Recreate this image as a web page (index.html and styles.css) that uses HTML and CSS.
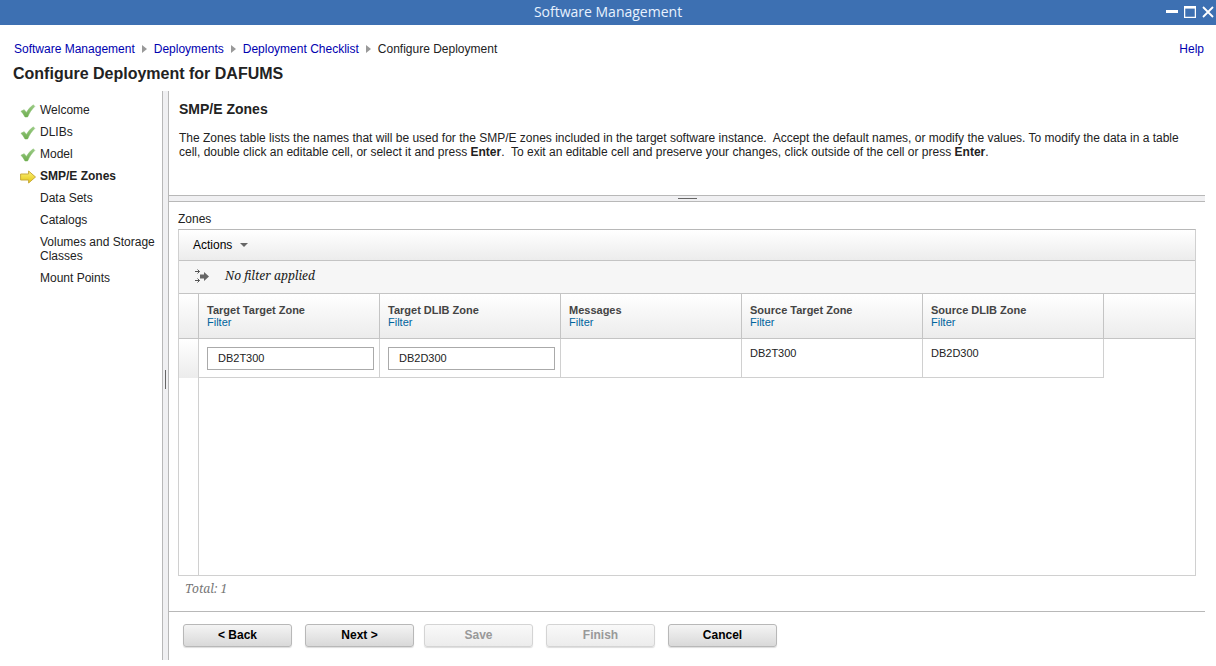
FILE: index.html
```html
<!DOCTYPE html>
<html lang="en">
<head>
<meta charset="utf-8">
<title>Software Management</title>
<link rel="stylesheet" href="styles.css">
</head>
<body>
<header class="titlebar">
  <span class="titlebar-side"></span>
  <span class="titlebar-text">Software Management</span>
  <div class="titlebar-side window-controls">
    <button type="button" class="window-button" aria-label="Minimize"><svg width="12" height="12" viewBox="0 0 12 12"><path d="M0 5.500h12" stroke="#fff" stroke-width="3"/></svg></button>
    <button type="button" class="window-button" aria-label="Maximize"><svg width="12" height="12" viewBox="0 0 12 12"><path d="M.6 0v11.400h10.800V0" fill="none" stroke="#fff" stroke-width="1.300"/><path d="M0 1.300h12" stroke="#fff" stroke-width="2.600"/></svg></button>
    <button type="button" class="window-button" aria-label="Close"><svg width="12" height="12" viewBox="0 0 12 12"><path d="M1 1l10 10M11 1L1 11" stroke="#fff" stroke-width="1.800"/></svg></button>
  </div>
</header>

<div class="top">
  <nav class="breadcrumb" aria-label="Breadcrumb">
    <a href="#">Software Management</a>
    <svg class="crumb-arrow" width="5" height="8" viewBox="0 0 5 8"><path d="M0 0l5 4-5 4z" fill="#999"/></svg>
    <a href="#">Deployments</a>
    <svg class="crumb-arrow" width="5" height="8" viewBox="0 0 5 8"><path d="M0 0l5 4-5 4z" fill="#999"/></svg>
    <a href="#">Deployment Checklist</a>
    <svg class="crumb-arrow" width="5" height="8" viewBox="0 0 5 8"><path d="M0 0l5 4-5 4z" fill="#999"/></svg>
    <span>Configure Deployment</span>
    <a class="help" href="#">Help</a>
  </nav>
  <h1 class="page-title">Configure Deployment for DAFUMS</h1>
</div>

<svg width="0" height="0" class="symbols" aria-hidden="true">
  <defs>
    <linearGradient id="green" x1="0" y1="0" x2="0" y2="1"><stop offset="0" stop-color="#9bcb86"/><stop offset="1" stop-color="#6fae50"/></linearGradient>
    <linearGradient id="gold" x1="0" y1="0" x2="0" y2="1"><stop offset="0" stop-color="#fdf27a"/><stop offset="1" stop-color="#e3c613"/></linearGradient>
    <symbol id="check" viewBox="0 0 16 14"><path d="M1 7.200l3.200-1.500 2.200 2.800C8.300 5.400 10.500 2.600 13.400.8l1.400 1.700C11.800 5.200 9.500 8.600 7.600 12.900H5C4 10.800 2.700 8.900 1 7.200z" fill="url(#green)" stroke="url(#green)" stroke-width=".6" stroke-linejoin="round"/></symbol>
    <symbol id="arrow" viewBox="0 0 16 14"><path d="M.6 4h8V1l6.900 6-6.900 6v-3H.6z" fill="url(#gold)" stroke="#c8ab3c" stroke-linejoin="round"/></symbol>
  </defs>
</svg>

<main class="workspace">
  <nav class="steps" aria-label="Steps">
    <ul class="step-list">
      <li class="step"><svg class="step-icon"><use href="#check"/></svg>Welcome</li>
      <li class="step"><svg class="step-icon"><use href="#check"/></svg>DLIBs</li>
      <li class="step"><svg class="step-icon"><use href="#check"/></svg>Model</li>
      <li class="step current"><svg class="step-icon"><use href="#arrow"/></svg>SMP/E Zones</li>
      <li class="step">Data Sets</li>
      <li class="step">Catalogs</li>
      <li class="step">Volumes and Storage Classes</li>
      <li class="step">Mount Points</li>
    </ul>
  </nav>
  <div class="splitter vertical"><span class="thumb"></span></div>

  <div class="content">
    <section class="intro">
      <h2 class="section-title">SMP/E Zones</h2>
      <p class="description">The Zones table lists the names that will be used for the SMP/E zones included in the target software instance.&nbsp; Accept the default names, or modify the values. To modify the data in a table cell, double click an editable cell, or select it and press <b>Enter</b>.&nbsp; To exit an editable cell and preserve your changes, click outside of the cell or press <b>Enter</b>.</p>
    </section>
    <div class="splitter horizontal"><span class="thumb"></span></div>

    <section class="zones">
      <h3 class="zones-label" id="zones-label">Zones</h3>
      <div class="grid">
        <div class="toolbar">
          <button type="button" class="actions">Actions <svg width="8" height="4" viewBox="0 0 8 4"><path d="M0 0h8L4 4z" fill="#666"/></svg></button>
        </div>
        <div class="filter-bar">
          <svg width="14" height="15" viewBox="0 0 14 15" fill="none" stroke="#555"><path d="M0 2.500h4.500M2.500.5l2 2-2 2M0 11.500h4.500M2.500 9.500l2 2-2 2"/><path d="M5 5.500h4V3l5 4.500L9 12V9.500H5z" fill="#666" stroke="none"/></svg>
          <span>No filter applied</span>
        </div>
        <table class="zone-table" aria-labelledby="zones-label">
          <colgroup><col class="col-handle"><col class="col-data"><col class="col-data"><col class="col-data"><col class="col-data"><col class="col-data"><col></colgroup>
          <thead>
            <tr>
              <td></td>
              <th scope="col">Target Target Zone<a href="#">Filter</a></th>
              <th scope="col">Target DLIB Zone<a href="#">Filter</a></th>
              <th scope="col">Messages<a href="#">Filter</a></th>
              <th scope="col">Source Target Zone<a href="#">Filter</a></th>
              <th scope="col">Source DLIB Zone<a href="#">Filter</a></th>
              <td></td>
            </tr>
          </thead>
          <tbody>
            <tr>
              <td class="handle"></td>
              <td><input class="zone-input" type="text" value="DB2T300" aria-label="Target Target Zone"></td>
              <td><input class="zone-input" type="text" value="DB2D300" aria-label="Target DLIB Zone"></td>
              <td></td>
              <td>DB2T300</td>
              <td>DB2D300</td>
              <td class="rest"></td>
            </tr>
          </tbody>
        </table>
        <div class="grid-space"></div>
      </div>
      <div class="total">Total: 1</div>
    </section>

    <footer class="wizard-buttons">
      <div class="button-group">
        <button type="button" class="button">&lt; Back</button>
        <button type="button" class="button">Next &gt;</button>
      </div>
      <div class="button-group">
        <button type="button" class="button" disabled>Save</button>
        <button type="button" class="button" disabled>Finish</button>
        <button type="button" class="button">Cancel</button>
      </div>
    </footer>
  </div>
</main>
</body>
</html>
```
FILE: styles.css
```css
* { box-sizing: border-box; }

body {
  margin: 0;
  min-height: 100vh;
  display: flex;
  flex-direction: column;
  padding-bottom: 6px;
  background: #fff;
  color: #222;
  font: 12px/14px Arial, "Liberation Sans", sans-serif;
}

h1, h2, h3, p, ul { margin: 0; padding: 0; }
a { color: #0000b0; text-decoration: none; }
button { font: inherit; padding: 0; border: 0; background: none; }
.symbols { position: absolute; }

.titlebar {
  display: flex;
  align-items: center;
  height: 25px;
  padding: 0 2px 1px;
  background: #3d70b2;
  color: #e8f2ff;
}
.titlebar-side { flex: 1; }
.titlebar-text { font: 14px/20px "Open Sans", "Noto Sans", sans-serif; }
.window-controls { display: flex; justify-content: flex-end; gap: 6px; }
.window-button { display: flex; }

.top { padding: 17px 12px 0 13px; }
.breadcrumb { display: flex; align-items: center; padding-left: 1px; }
.crumb-arrow { margin: 0 7px; }
.help { margin-left: auto; }
.page-title { margin-top: 8px; font-size: 16px; line-height: 20px; }

.workspace { flex: 1; display: flex; margin-top: 7px; padding-right: 11px; }
.steps { width: 162px; padding: 12px 4px 0 20px; }
.step-list { list-style: none; display: flex; flex-direction: column; gap: 8px; }
.step { position: relative; padding-left: 20px; }
.step-icon { position: absolute; left: 0; top: 1px; width: 16px; height: 14px; }
.current { font-weight: bold; }

.splitter { display: flex; align-items: center; justify-content: center; background: #f0f0f2; }
.vertical { width: 7px; padding-top: 8px; border: solid #b8b8b8; border-width: 0 1px; }
.horizontal { height: 7px; border: solid #b8b8b8; border-width: 1px 0; }
.thumb { background: #666; }
.vertical .thumb { width: 1px; height: 19px; }
.horizontal .thumb { width: 19px; height: 1px; }

.content { flex: 1; min-width: 0; display: flex; flex-direction: column; }
.intro { min-height: 104px; padding: 10px 10px 0; }
.section-title { font-size: 14px; line-height: 16px; }
.description { margin-top: 14px; }

.zones { flex: 1; display: flex; flex-direction: column; padding: 10px 9px 14px; }
.zones-label { font-size: 12px; font-weight: normal; }
.grid {
  flex: 1;
  display: flex;
  flex-direction: column;
  margin-top: 3px;
  border: 1px solid #d0d0d0;
  border-top-color: #b8b8b8;
}
.toolbar {
  display: flex;
  height: 31px;
  padding-left: 14px;
  border-bottom: 1px solid #c4c4c4;
  background: linear-gradient(#fff, #ececec);
}
.actions { display: flex; align-items: center; gap: 8px; color: #000; }
.filter-bar {
  display: flex;
  align-items: center;
  gap: 16px;
  height: 32px;
  padding: 0 16px 2px;
  background: #f6f6f6;
}
.filter-bar span, .total { font: italic 12px/16px "Droid Serif", "Noto Serif", "Liberation Serif", serif; }

.zone-table {
  width: 100%;
  table-layout: fixed;
  border-collapse: separate;
  border-spacing: 0;
  font-size: 11px;
  line-height: 12px;
}
.col-handle { width: 20px; }
.col-data { width: 181px; }
.zone-table th, .zone-table td { border: solid #d0d0d0; border-width: 0 1px 1px 0; text-align: left; vertical-align: top; }
.zone-table thead th, .zone-table thead td {
  height: 46px;
  padding: 10px 8px 0;
  border-top-width: 1px;
  border-color: #c4c4c4;
  background: linear-gradient(#fff, #ececec);
  color: #444;
}
.zone-table thead td:last-child { border-right: 0; }
.zone-table th a { display: block; color: #00649d; font-weight: normal; }
.zone-table tbody td { height: 39px; padding: 8px 5px 0 8px; }
.zone-table .handle { background: linear-gradient(#fff, #ececec); border-bottom: 0; }
.zone-table .rest { border: 0; }
.zone-input {
  display: block;
  width: 100%;
  height: 23px;
  padding: 0 10px 2px;
  border: 1px solid #aaa;
  background: #fff;
  color: #222;
  font: inherit;
}
.grid-space { flex: 1; width: 20px; border-right: 1px solid #d0d0d0; }
.total { margin-top: 5px; padding-left: 7px; color: #777; }

.wizard-buttons { display: flex; gap: 10px; padding: 12px 14px 13px; border-top: 1px solid #b8b8b8; }
.button-group { display: flex; gap: 13px; }
.button {
  width: 109px;
  height: 23px;
  padding-bottom: 2px;
  border: 1px solid #b8b8b8;
  border-radius: 3px;
  background: linear-gradient(#f4f4f4, #d9d9d9);
  box-shadow: 0 1px 1px #ddd;
  color: #000;
  font-weight: bold;
}
.button:disabled { border-color: #d4d4d4; background: linear-gradient(#f9f9f9, #ececec); color: #999; }
```
